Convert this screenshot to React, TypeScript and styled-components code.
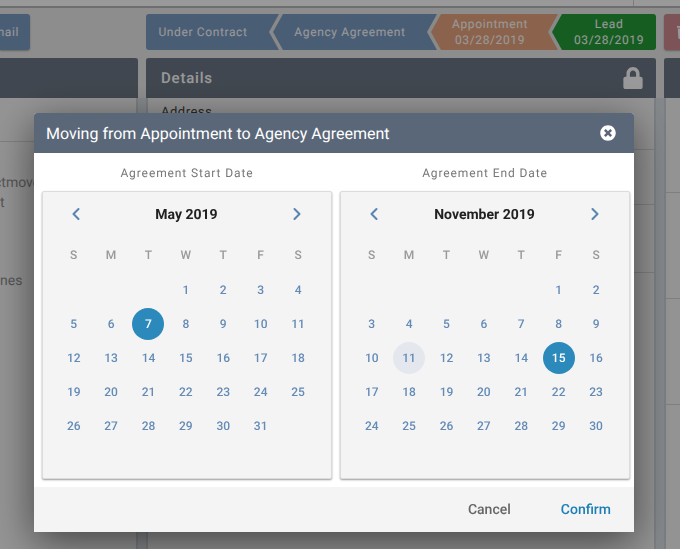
import { ChevronLeft, ChevronRight } from "lucide-react";
import { FaLock, FaTimesCircle, FaTrash } from "react-icons/fa";
import styled, { createGlobalStyle } from "styled-components";

const GlobalStyle = createGlobalStyle`
  html, body {
    margin: 0;
    height: 100%;
    overflow: hidden;
    background: #ececec;
    font-family: Roboto, "Liberation Sans", sans-serif;
    text-rendering: geometricPrecision;
  }
`;

const Page = styled.div`
  width: 680px;
  height: 549px;
  overflow: hidden;
  display: flex;
  flex-direction: column;
`;

const TopBar = styled.div`
  height: 6px;
  flex: none;
  background: #fff;
  border-bottom: 2px solid #b8b8b8;
`;

const TopBarCell = styled.div`
  width: 633px;
  height: 100%;
  border-right: 1px solid #d0d0d0;
`;

const Columns = styled.div`
  flex: 1;
  display: grid;
  grid-template-columns: 138px 510px 40px;
  gap: 8px;
  padding-top: 6px;
  background: linear-gradient(transparent 90px, #dee3e8 90px);
`;

const Column = styled.div`
  display: flex;
  flex-direction: column;
  gap: 8px;
  min-width: 0;
`;

const ActionButton = styled.div<{ $bg: string; $side: "left" | "right" }>`
  height: 36px;
  align-self: flex-start;
  width: ${(p) => (p.$side === "left" ? "30px" : "46px")};
  display: flex;
  align-items: center;
  justify-content: ${(p) => (p.$side === "left" ? "flex-end" : "flex-start")};
  padding: ${(p) => (p.$side === "left" ? "0 11px 0 0" : "0 0 0 12px")};
  box-sizing: border-box;
  border-radius: ${(p) => (p.$side === "left" ? "0 3px 3px 0" : "3px 0 0 3px")};
  background: ${(p) => p.$bg};
  color: #fff;
  font-size: 12px;
  letter-spacing: 0.6px;
  overflow: hidden;
  white-space: nowrap;
  box-shadow: 0 1px 2px rgba(0, 0, 0, 0.3);
`;

const Steps = styled.div`
  display: flex;
  height: 36px;
  background: #e4e4e4;
  border-radius: 3px;
`;

const Step = styled.div<{ $bg: string; $width: number; $pad: string; $first?: boolean; $last?: boolean }>`
  flex: none;
  width: ${(p) => p.$width}px;
  margin-left: ${(p) => (p.$first ? 0 : -6)}px;
  padding: ${(p) => p.$pad};
  box-sizing: border-box;
  display: flex;
  flex-direction: column;
  align-items: center;
  justify-content: center;
  background: ${(p) => p.$bg};
  color: #fff;
  font-size: 12px;
  line-height: 16px;
  letter-spacing: 0.63px;
  white-space: nowrap;
  border-radius: ${(p) => (p.$first ? "3px 0 0 3px" : p.$last ? "0 3px 3px 0" : "0")};
  clip-path: ${(p) =>
    p.$first
      ? "polygon(0 0, 100% 0, calc(100% - 10px) 50%, 100% 100%, 0 100%)"
      : p.$last
        ? "polygon(10px 0, 100% 0, 100% 100%, 10px 100%, 0 50%)"
        : "polygon(10px 0, 100% 0, calc(100% - 10px) 50%, 100% 100%, 10px 100%, 0 50%)"};
`;

const Panel = styled.div`
  flex: 1;
  display: flex;
  flex-direction: column;
  background: #f6f6f6;
  border: solid #cdd2d9;
  border-width: 0 2px;
`;

const LeftPanel = styled(Panel)`
  border-left: none;
`;

const PanelHeader = styled.div`
  height: 40px;
  flex: none;
  margin: 0 -2px;
  padding: 0 12px 0 15px;
  display: flex;
  align-items: center;
  justify-content: space-between;
  background: #6d7785;
  border-radius: 3px 3px 0 0;
  color: #fff;
  font-size: 15px;
  font-weight: 500;
  letter-spacing: 0.8px;
`;

const PanelRow = styled.div<{ $height: number }>`
  height: ${(p) => p.$height}px;
  box-sizing: border-box;
  flex: none;
  padding: 7px 13px 0;
  border-bottom: 1px solid #d6d6d6;
  color: #444;
  font-size: 13px;
  letter-spacing: 0.5px;
  overflow: hidden;
  white-space: nowrap;
`;

const ClippedText = styled.div<{ $top: number; $shift: number }>`
  margin-top: ${(p) => p.$top}px;
  margin-left: ${(p) => p.$shift}px;
  color: #909090;
  font-size: 14px;
  line-height: 20px;
  white-space: nowrap;
`;

const Scrim = styled.div`
  position: fixed;
  inset: 0;
  background: rgba(0, 0, 0, 0.4);
`;

const Dialog = styled.div`
  position: fixed;
  left: 34px;
  top: 113px;
  width: 600px;
  height: 419px;
  display: flex;
  flex-direction: column;
  background: #fff;
  border-radius: 3px 3px 0 0;
  box-shadow: 0 10px 40px rgba(0, 0, 0, 0.55);
`;

const DialogHeader = styled.div`
  height: 40px;
  flex: none;
  box-sizing: border-box;
  padding: 0 18px 0 12px;
  display: flex;
  align-items: center;
  justify-content: space-between;
  background: #5a6778;
  border-radius: 3px 3px 0 0;
  color: #fff;
  font-size: 16px;
`;

const DialogBody = styled.div`
  flex: 1;
  display: grid;
  grid-template-columns: 290px 290px;
  gap: 8px;
  padding: 0 4px 8px 8px;
  min-height: 0;
`;

const CalendarColumn = styled.div`
  display: flex;
  flex-direction: column;
  min-width: 0;
`;

const CalendarLabel = styled.div`
  height: 38px;
  padding-top: 1px;
  box-sizing: border-box;
  flex: none;
  display: flex;
  align-items: center;
  justify-content: center;
  color: #777;
  font-size: 12px;
  letter-spacing: 0.9px;
`;

const CalendarCard = styled.div`
  flex: 1;
  box-sizing: border-box;
  padding: 0 14px 0 12px;
  background: #f4f4f4;
  border: 1px solid #dcdcdc;
  border-radius: 2px;
  box-shadow: 0 1px 2px rgba(0, 0, 0, 0.4);
`;

const MonthBar = styled.div`
  height: 44px;
  padding: 0 10px 0 11px;
  display: flex;
  align-items: center;
  justify-content: space-between;
  color: #5b84b1;
`;

const MonthName = styled.div`
  padding-top: 1px;
  color: #212121;
  font-size: 14px;
  font-weight: 700;
`;

const WeekGrid = styled.div`
  display: grid;
  grid-template-columns: repeat(7, 37.4px);
`;

const WeekDay = styled.div`
  height: 37px;
  display: flex;
  align-items: center;
  justify-content: center;
  color: #9a9a9a;
  font-size: 12px;
  font-weight: 500;
`;

const Day = styled.div<{ $state?: "selected" | "today" }>`
  height: 34px;
  display: flex;
  align-items: center;
  justify-content: center;
  color: ${(p) => (p.$state === "selected" ? "#fff" : "#648bb6")};
  font-size: 12px;
  font-weight: 500;
  position: relative;
  z-index: 0;

  &::before {
    content: "";
    position: absolute;
    z-index: -1;
    width: 32px;
    height: 32px;
    border-radius: 50%;
    display: ${(p) => (p.$state ? "block" : "none")};
    background: ${(p) => (p.$state === "selected" ? "#2b8abb" : "#e4e8ee")};
  }
`;

const DialogFooter = styled.div`
  height: 45px;
  flex: none;
  box-sizing: border-box;
  padding: 0 23px 0 0;
  display: flex;
  align-items: center;
  justify-content: flex-end;
  gap: 50px;
  background: #f4f4f4;
`;

const FooterButton = styled.div<{ $primary?: boolean }>`
  color: ${(p) => (p.$primary ? "#1b7fb5" : "#666")};
  font-size: 14px;
  font-weight: 500;
`;

const WEEK = ["S", "M", "T", "W", "T", "F", "S"];

type CalendarProps = {
  label: string;
  month: string;
  offset: number;
  days: number;
  selected: number;
  today?: number;
};

function Calendar({ label, month, offset, days, selected, today }: CalendarProps) {
  return (
    <CalendarColumn>
      <CalendarLabel>{label}</CalendarLabel>
      <CalendarCard>
        <MonthBar>
          <ChevronLeft size={20} strokeWidth={2.5} />
          <MonthName>{month}</MonthName>
          <ChevronRight size={20} strokeWidth={2.5} />
        </MonthBar>
        <WeekGrid>
          {WEEK.map((d, i) => (
            <WeekDay key={i}>{d}</WeekDay>
          ))}
          {Array.from({ length: offset }, (_, i) => (
            <Day key={`blank-${i}`} />
          ))}
          {Array.from({ length: days }, (_, i) => {
            const n = i + 1;
            const state = n === selected ? "selected" : n === today ? "today" : undefined;
            return (
              <Day key={n} $state={state}>
                {n}
              </Day>
            );
          })}
        </WeekGrid>
      </CalendarCard>
    </CalendarColumn>
  );
}

export default function App() {
  return (
    <Page>
      <GlobalStyle />
      <TopBar>
        <TopBarCell />
      </TopBar>
      <Columns>
        <Column>
          <ActionButton $bg="#7b9cc4" $side="left">Email</ActionButton>
          <LeftPanel>
            <PanelHeader />
            <PanelRow $height={44} />
            <ClippedText $top={31} $shift={-6}>ctmoves</ClippedText>
            <ClippedText $top={0} $shift={0}>t</ClippedText>
            <ClippedText $top={58} $shift={0}>nes</ClippedText>
          </LeftPanel>
        </Column>
        <Column>
          <Steps>
            <Step $first $bg="#7b9cc4" $width={133} $pad="0 19px 0 0">Under Contract</Step>
            <Step $bg="#7b9cc4" $width={164} $pad="0 10px 0 0">Agency Agreement</Step>
            <Step $bg="#e8a580" $width={127} $pad="0 9px 0 0">
              <span>Appointment</span>
              <span>03/28/2019</span>
            </Step>
            <Step $last $bg="#269c3a" $width={104} $pad="0 0 0 10px">
              <span>Lead</span>
              <span>03/28/2019</span>
            </Step>
          </Steps>
          <Panel>
            <PanelHeader>
              Details
              <FaLock size={22} />
            </PanelHeader>
            <PanelRow $height={52}>Address</PanelRow>
            <PanelRow $height={55} />
            <PanelRow $height={68} />
          </Panel>
        </Column>
        <Column>
          <ActionButton $bg="#d08a92" $side="right">
            <FaTrash size={14} />
          </ActionButton>
          <Panel>
            <PanelHeader />
            <PanelRow $height={95} />
            <PanelRow $height={106} />
            <PanelRow $height={106} />
          </Panel>
        </Column>
      </Columns>
      <Scrim />
      <Dialog>
        <DialogHeader>
          Moving from Appointment to Agency Agreement
          <FaTimesCircle size={16} />
        </DialogHeader>
        <DialogBody>
          <Calendar label="Agreement Start Date" month="May 2019" offset={3} days={31} selected={7} />
          <Calendar label="Agreement End Date" month="November 2019" offset={5} days={30} selected={15} today={11} />
        </DialogBody>
        <DialogFooter>
          <FooterButton>Cancel</FooterButton>
          <FooterButton $primary>Confirm</FooterButton>
        </DialogFooter>
      </Dialog>
    </Page>
  );
}
